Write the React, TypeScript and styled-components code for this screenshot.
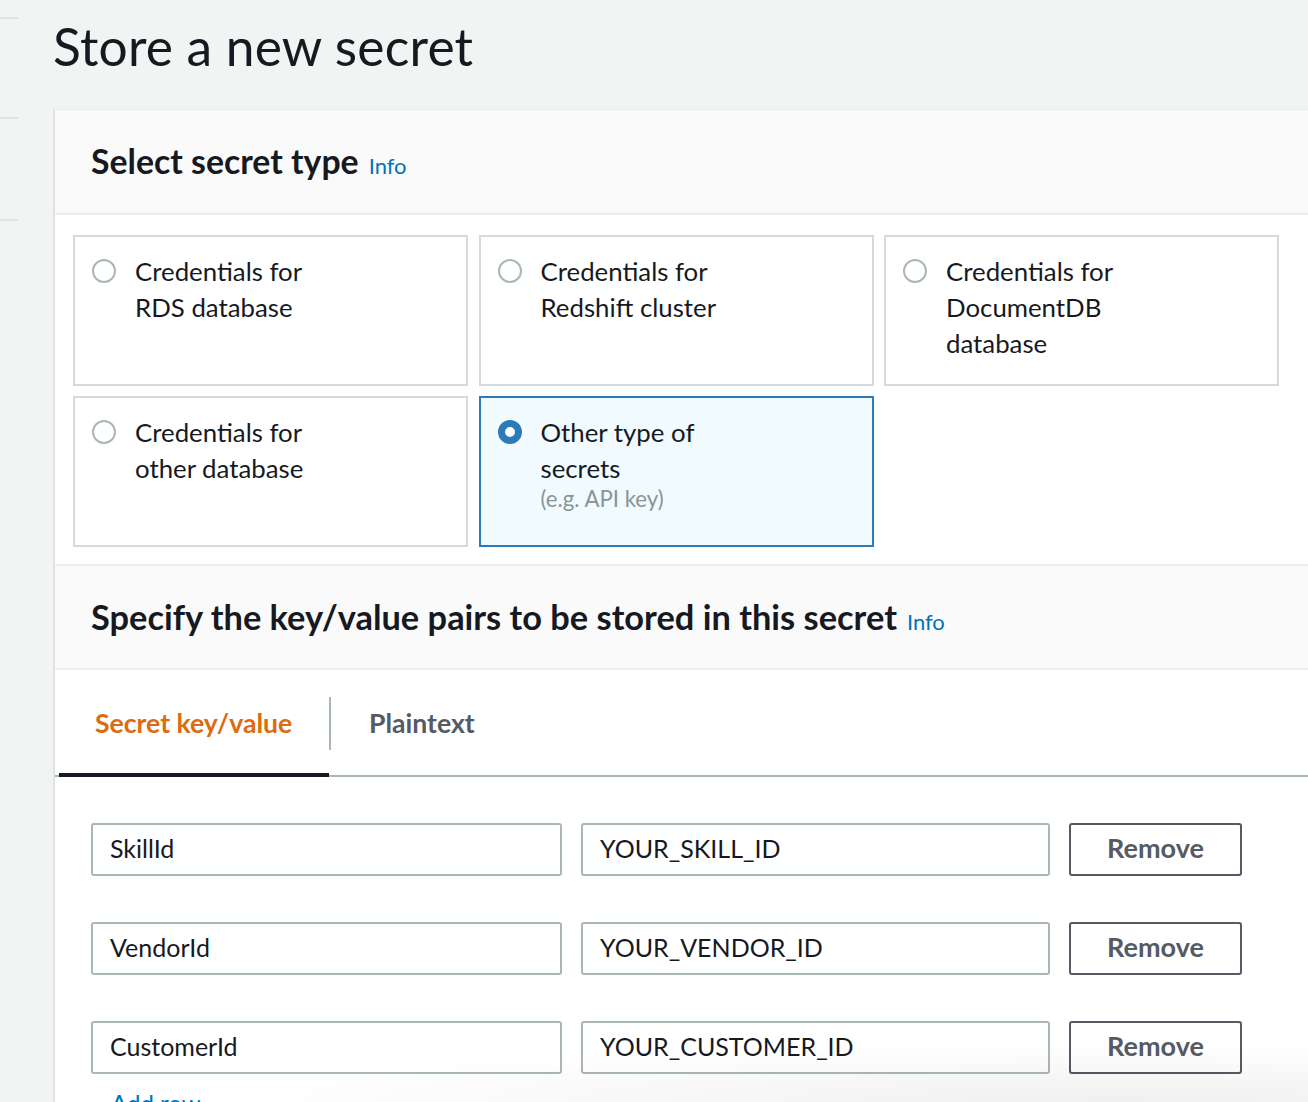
import React from "react";
import styled, { createGlobalStyle } from "styled-components";

const GlobalStyle = createGlobalStyle`
  html, body {
    margin: 0;
    padding: 0;
    background: #f2f3f3;
    font-family: Lato, "Open Sans", sans-serif;
    color: #16191f;
    overflow: hidden;
  }
  * { box-sizing: border-box; }
`;

const Page = styled.div`
  display: flex;
  align-items: flex-start;
  width: 1308px;
  height: 1102px;
  overflow: hidden;
  position: relative;
`;

const Rail = styled.div`
  width: 18px;
  flex: none;
  display: flex;
  flex-direction: column;
`;

const RailItem = styled.div<{ $h: number }>`
  height: ${(p) => p.$h}px;
  flex: none;
  border-bottom: 2px solid #dfe3e3;
`;

const Main = styled.div`
  margin-left: 35px;
  flex: none;
  width: 1300px;
  display: flex;
  flex-direction: column;
  & > * {
    flex-shrink: 0;
  }
`;

const Title = styled.h1`
  margin: 0;
  height: 109px;
  padding-top: 16px;
  font-size: 51.5px;
  font-weight: 400;
  line-height: 60px;
  letter-spacing: 0.2px;
  color: #16191f;
`;

const Container = styled.section`
  background: #fff;
  border-left: 2px solid #dfe3e3;
  border-top: 1px solid #eaeded;
`;

const Header = styled.div<{ $top?: boolean }>`
  height: ${(p) => (p.$top ? 105 : 106)}px;
  background: #fafafa;
  border-bottom: 2px solid #eaeded;
  border-top: ${(p) => (p.$top ? "none" : "2px solid #eaeded")};
  display: flex;
  align-items: center;
  padding-left: 36px;
  padding-bottom: 2px;
`;

const Heading = styled.h2<{ $wide?: boolean }>`
  margin: 0;
  font-size: ${(p) => (p.$wide ? "34.4px" : "33.8px")};
  font-weight: 700;
  color: #16191f;
  display: flex;
  align-items: baseline;
  gap: 10px;
  white-space: nowrap;
`;

const InfoLink = styled.a`
  font-size: 22px;
  font-weight: 400;
  color: #0073bb;
  text-decoration: none;
`;

const CardGrid = styled.div`
  display: grid;
  grid-template-columns: 395px 395px 395px;
  grid-auto-rows: 151px;
  column-gap: 10.5px;
  row-gap: 10px;
  padding: 20px 18px 17px;
`;

const Card = styled.label<{ $selected?: boolean }>`
  display: flex;
  align-items: flex-start;
  gap: 19px;
  padding: 16px 17px;
  border: 2px solid ${(p) => (p.$selected ? "#2b7bb9" : "#d5dbdb")};
  background: ${(p) => (p.$selected ? "#f1faff" : "#fff")};
  cursor: pointer;
`;

const Radio = styled.span<{ $checked?: boolean }>`
  flex: none;
  width: 24px;
  height: 24px;
  margin-top: 6px;
  border-radius: 50%;
  border: ${(p) => (p.$checked ? "7px solid #2b7bb9" : "2px solid #aab7b8")};
  background: #fff;
`;

const CardText = styled.div`
  display: flex;
  flex-direction: column;
  font-size: 25.8px;
  line-height: 36px;
  color: #16191f;
`;

const CardHint = styled.span`
  font-size: 22.2px;
  line-height: 26px;
  color: #879596;
`;

const Tabs = styled.div`
  display: flex;
  align-items: stretch;
  height: 107px;
  border-bottom: 2px solid #aab7b8;
  padding-left: 4px;
`;

const Tab = styled.button<{ $active?: boolean }>`
  all: unset;
  box-sizing: border-box;
  cursor: pointer;
  display: flex;
  align-items: center;
  justify-content: flex-start;
  white-space: nowrap;
  font-family: Lato, "Open Sans", sans-serif;
  font-size: 26.6px;
  font-weight: 700;
  padding: 3px 38px 0 ${(p) => (p.$active ? "36px" : "38px")};
  width: ${(p) => (p.$active ? "270px" : "auto")};
  color: ${(p) => (p.$active ? "#dd6b10" : "#545b64")};
  margin-bottom: -2px;
  border-bottom: 4px solid ${(p) => (p.$active ? "#16191f" : "transparent")};
`;

const TabDivider = styled.span`
  width: 2px;
  background: #aab7b8;
  margin: 27px 0 25px;
`;

const Rows = styled.div`
  display: flex;
  flex-direction: column;
  gap: 46px;
  padding: 46px 36px 0;
`;

const Row = styled.div`
  display: flex;
  gap: 19px;
`;

const TextInput = styled.input<{ $w: number }>`
  width: ${(p) => p.$w}px;
  height: 53px;
  border: 2px solid #aab7b8;
  border-radius: 3px;
  padding: 0 17px 3px;
  font-family: Lato, "Open Sans", sans-serif;
  font-size: 25px;
  color: #16191f;
  background: #fff;
  outline: none;
`;

const RemoveButton = styled.button`
  width: 173px;
  height: 53px;
  border: 2px solid #545b64;
  border-radius: 3px;
  background: #fff;
  font-family: Lato, "Open Sans", sans-serif;
  font-size: 27px;
  font-weight: 700;
  color: #545b64;
  padding: 0 0 5px;
  cursor: pointer;
`;

const AddLink = styled.a`
  display: block;
  margin: 14px 0 0 56px;
  font-size: 24px;
  color: #0073bb;
  text-decoration: none;
`;

const Shade = styled.div`
  position: absolute;
  right: 0;
  bottom: 0;
  width: 1300px;
  height: 70px;
  pointer-events: none;
  background: radial-gradient(ellipse 900px 60px at 85% 100%, rgba(0, 0, 0, 0.06), rgba(0, 0, 0, 0) 100%);
`;

const types = [
  { label: ["Credentials for", "RDS database"] },
  { label: ["Credentials for", "Redshift cluster"] },
  { label: ["Credentials for", "DocumentDB", "database"] },
  { label: ["Credentials for", "other database"] },
  { label: ["Other type of", "secrets"], hint: "(e.g. API key)", selected: true },
];

const pairs = [
  ["SkillId", "YOUR_SKILL_ID"],
  ["VendorId", "YOUR_VENDOR_ID"],
  ["CustomerId", "YOUR_CUSTOMER_ID"],
];

export default function App() {
  return (
    <Page>
      <GlobalStyle />
      <Rail>
        <RailItem $h={19} />
        <RailItem $h={100} />
        <RailItem $h={102} />
      </Rail>
      <Main>
        <Title>Store a new secret</Title>
        <Container>
          <Header $top>
            <Heading>
              Select secret type <InfoLink href="#">Info</InfoLink>
            </Heading>
          </Header>
          <CardGrid>
            {types.map((t, i) => (
              <Card key={i} $selected={t.selected}>
                <Radio $checked={t.selected} />
                <CardText>
                  {t.label.map((l) => (
                    <span key={l}>{l}</span>
                  ))}
                  {t.hint && <CardHint>{t.hint}</CardHint>}
                </CardText>
              </Card>
            ))}
          </CardGrid>
          <Header>
            <Heading $wide>
              Specify the key/value pairs to be stored in this secret <InfoLink href="#">Info</InfoLink>
            </Heading>
          </Header>
          <Tabs>
            <Tab $active>Secret key/value</Tab>
            <TabDivider />
            <Tab>Plaintext</Tab>
          </Tabs>
          <Rows>
            {pairs.map(([k, v]) => (
              <Row key={k}>
                <TextInput $w={471} defaultValue={k} />
                <TextInput $w={469} defaultValue={v} />
                <RemoveButton>Remove</RemoveButton>
              </Row>
            ))}
          </Rows>
          <AddLink href="#">Add row</AddLink>
        </Container>
      </Main>
      <Shade />
    </Page>
  );
}
